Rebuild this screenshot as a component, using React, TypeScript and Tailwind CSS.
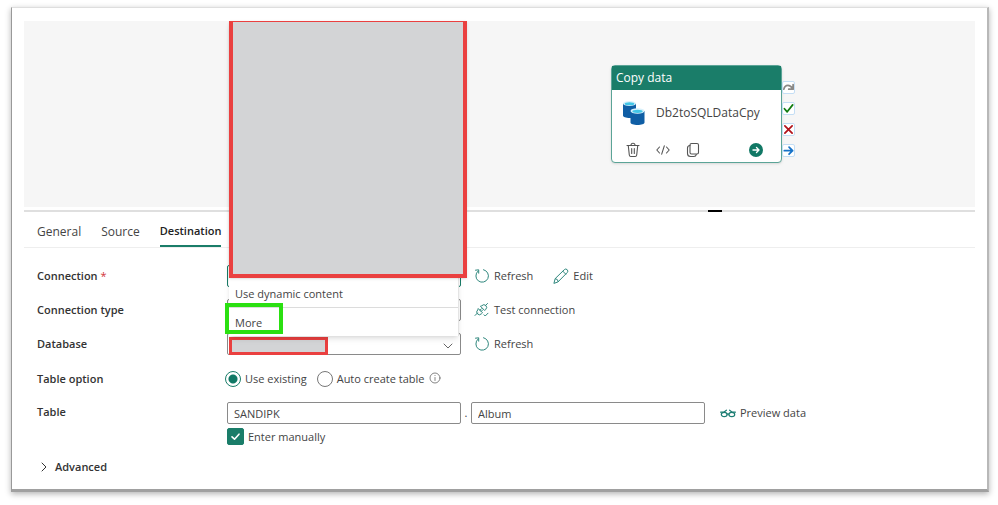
import React, { useState } from "react";

type IconProps = { className?: string };

const line = {
  fill: "none",
  stroke: "currentColor",
  strokeLinecap: "round" as const,
  strokeLinejoin: "round" as const,
  "aria-hidden": true,
};

function RefreshIcon() {
  return (
    <svg {...line} viewBox="0 0 16 16" strokeWidth="1" className="size-4 shrink-0 text-[#2f877d]">
      <path d="M9.500 1.700A6.300 6.300 0 1 1 4 3.100" />
      <path d="M1.500 2.200l3.200-.4v3.400" />
    </svg>
  );
}

function PencilIcon() {
  return (
    <svg {...line} viewBox="0 0 16 16" strokeWidth="1" className="size-4 shrink-0 text-[#2f877d]">
      <path d="M1 15l1.200-4.400L11.300 1.700a1.900 1.900 0 0 1 2.900 2.900L5.200 13.700z" />
      <path d="M9.800 3.200l2.900 2.900M2.400 10.600q2.600.3 2.900 3" />
    </svg>
  );
}

function PlugIcon() {
  return (
    <svg {...line} viewBox="0 0 16 16" strokeWidth="1" className="size-4 shrink-0 text-[#2f877d]">
      <path d="M1 13.500l2.500-2.500M13.500 1.500l-2 2" />
      <path d="M4.500 6.800l4 4-1.200 1.100a2.600 2.600 0 0 1-3.800-3.800z" />
      <path d="M6.700 4.500l4 4 1.100-1.200a2.600 2.600 0 0 0-3.800-3.800z" />
      <path d="M6 8.200l1.500-1.500M7.200 9.400l1.500-1.500M10 12.800l1.200 1.200 2.800-2.800" />
    </svg>
  );
}

function GlassesIcon() {
  return (
    <svg {...line} viewBox="0 0 16 12" strokeWidth="1.2" className="h-3 w-4 shrink-0 text-[#1c7d73]">
      <ellipse cx="4.200" cy="7.500" rx="2.900" ry="2.200" />
      <ellipse cx="11.800" cy="7.500" rx="2.900" ry="2.200" />
      <path d="M7.100 7.200q.9-.6 1.800 0M.6 5.200h3.200l2.600-2M15.400 5.200h-3.200l-2.600-2" />
    </svg>
  );
}

function InfoIcon() {
  return (
    <svg {...line} viewBox="0 0 12 12" strokeWidth="0.8" className="mb-0.5 size-3 shrink-0 text-[#666]">
      <circle cx="6" cy="6" r="5" />
      <path d="M6 5.500v3M6 3.500v.1" />
    </svg>
  );
}

function Chevron({ className }: IconProps) {
  return (
    <svg {...line} viewBox="0 0 10 10" strokeWidth="1" className={className}>
      <path d="M1 3l4 4 4-4" />
    </svg>
  );
}

function DatabaseIcon() {
  return (
    <svg viewBox="0 0 24 26" className="h-[26px] w-6 shrink-0" aria-hidden>
      <path d="M1 3.500v12c0 1.400 3 2.500 6.500 2.500S14 17 14 15.500v-12z" fill="#0f5ea5" />
      <ellipse cx="7.500" cy="3.500" rx="6.500" ry="2.500" fill="#d9f1fb" />
      <ellipse cx="7.500" cy="3.800" rx="4.800" ry="1.500" fill="#42c6e8" />
      <path d="M8.500 11v11.500c0 1.400 3.200 2.500 7 2.500s7-1.100 7-2.500V11z" fill="#0f5ea5" />
      <ellipse cx="15.500" cy="11" rx="7" ry="2.700" fill="#d9f1fb" />
      <ellipse cx="15.500" cy="11.300" rx="5.200" ry="1.600" fill="#42c6e8" />
    </svg>
  );
}

function TrashIcon() {
  return (
    <svg {...line} viewBox="0 0 14 16" strokeWidth="1.1" className="h-4 w-3.5 text-[#555]">
      <path d="M1 3.500h12M5 3.300a2 2 0 0 1 4 0M2.300 3.700l1 9.300q.2 1.500 1.500 1.500h4.400q1.300 0 1.500-1.500l1-9.300M5.700 6.500v5M8.300 6.500v5" />
    </svg>
  );
}

function CodeIcon() {
  return (
    <svg {...line} viewBox="0 0 14 12" strokeWidth="1.1" className="h-3 w-3.5 text-[#555]">
      <path d="M3.500 3L.8 6l2.700 3M10.500 3l2.700 3-2.700 3M8.300 1.800L5.700 10.200" />
    </svg>
  );
}

function CopyIcon() {
  return (
    <svg {...line} viewBox="0 0 14 16" strokeWidth="1.1" className="h-4 w-3.5 text-[#555]">
      <rect x="4" y="1.500" width="8.500" height="10.500" rx="1.500" />
      <path d="M4 3.500q-2.500.3-2.500 2.500v5.500q0 3 3 3H8q1.800 0 2.300-2" />
    </svg>
  );
}

function RunIcon() {
  return (
    <svg {...line} viewBox="0 0 14 14" strokeWidth="1.400" className="size-3.5">
      <circle cx="7" cy="7" r="7" fill="#117865" stroke="none" />
      <path d="M4 7h6M7.500 4.500L10 7 7.500 9.500" stroke="#fff" />
    </svg>
  );
}

const ports = [
  { name: "On skip", color: "text-[#8a8886]", d: "M.8 6.500q.7-3.500 3.700-3.500 2.500 0 4.200 3M9.200 2.300v4.200H5.200" },
  { name: "On success", color: "text-[#107c10]", d: "M1.300 5.200l2.500 2.800 5-6.300" },
  { name: "On fail", color: "text-[#b3131b]", d: "M1.700 1.700l6.600 6.600M8.300 1.700L1.700 8.300" },
  { name: "On completion", color: "text-[#1672c8]", d: "M1.200 5.200h7.500M5.500 2l3.200 3.200-3.200 3.200" },
];

function ActivityNode() {
  return (
    <div className="absolute left-[587px] top-11 flex items-start">
      <section className="w-[171px] rounded-sm border border-[#5ba497] bg-white shadow-sm">
        <h2 className="h-6 bg-[#1a7d69] px-1 text-xs leading-6 text-white">Copy data</h2>
        <div className="flex h-[46px] items-center gap-2.5 pl-2.5 text-xs text-[#444]">
          <DatabaseIcon />
          Db2toSQLDataCpy
        </div>
        <div className="flex h-[26px] items-center gap-4 pl-3.5 pr-[18px] pt-0.5">
          <button aria-label="Delete"><TrashIcon /></button>
          <button aria-label="View code"><CodeIcon /></button>
          <button aria-label="Copy"><CopyIcon /></button>
          <button aria-label="Run" className="ml-auto"><RunIcon /></button>
        </div>
      </section>
      <div className="flex flex-col gap-2 pt-4">
        {ports.map((p) => (
          <button
            key={p.name}
            aria-label={p.name}
            className={`flex h-[13px] w-[13px] items-center justify-center rounded-xs border border-[#c4def5] bg-white ${p.color}`}
          >
            <svg {...line} viewBox="0 0 10 10" strokeWidth="1.600" className="size-[11px] shrink-0">
              <path d={p.d} />
            </svg>
          </button>
        ))}
      </div>
    </div>
  );
}

function Action({ icon, children }: { icon: React.ReactNode; children: React.ReactNode }) {
  return (
    <button className="flex items-center gap-1 whitespace-nowrap">
      {icon}
      {children}
    </button>
  );
}

function ConnectionMenu() {
  return (
    <div className="absolute -bottom-[49px] left-0.5 z-10 w-[230px] border-r border-[#e4e4e4] bg-white shadow-md">
      <div className="h-[257px] w-[238px] border-4 border-t border-[#ea4040] bg-[#d3d4d6] shadow-sm" />
      <button className="block h-[30px] w-full border-b border-[#dcdcdc] px-1.5 pt-1 text-left">
        Use dynamic content
      </button>
      <button className="block h-7 w-full px-1.5 pt-0.5 text-left">More</button>
      <div className="pointer-events-none absolute -left-1 bottom-0.5 h-[31px] w-[58px] border-4 border-[#2be011]" />
    </div>
  );
}

const labelClass = "w-[190px] shrink-0 font-semibold text-[#333]";
const fieldClass = "h-[22px] w-[234px] appearance-none rounded-xs border border-[#8a8a8a] bg-white px-1.5";
const radioClass =
  "size-4 appearance-none rounded-full border border-[#777] checked:border-[#1a7d69] checked:bg-[radial-gradient(circle,#117865_4px,white_5px)]";

export default function App() {
  const [mode, setMode] = useState("existing");
  const [manual, setManual] = useState(true);

  return (
    <main className="bg-white pb-[13px] pl-[11px] pr-[9px] pt-[7px] font-['Open_Sans','Noto_Sans',sans-serif] text-[11px] leading-4 text-[#444]">
      <div className="border-b-[3px] border-l border-r-2 border-t border-b-[#a0a0a0] border-l-[#999] border-r-[#b8b8b8] border-t-[#dedede] px-3 pb-3.5 pt-[13px] shadow-[0_2px_6px_rgba(0,0,0,0.3)]">
        <div className="relative h-[186px] bg-[#f6f6f6]">
          <ActivityNode />
        </div>

        <div className="flex h-[7px] items-center">
          <div className="h-0.5 w-[684px] bg-[#dfdfdf]" />
          <div className="h-0.5 w-3.5 bg-black" />
          <div className="h-0.5 grow bg-[#dfdfdf]" />
        </div>

        <nav className="flex h-[34px] gap-5 border-b border-[#eee] pl-[13px] text-xs">
          <a href="#general" className="flex items-center pt-0.5">General</a>
          <a href="#source" className="flex items-center pt-0.5">Source</a>
          <a href="#destination" className="flex items-center border-b-2 border-[#1a7d69] pt-1 text-[11px] font-semibold text-[#222]">
            Destination
          </a>
        </nav>

        <form className="pl-[13px] pt-2.5" onSubmit={(e) => e.preventDefault()}>
          <div className="flex h-[35px] items-center">
            <label htmlFor="connection" className={labelClass}>
              Connection <span className="align-top font-normal text-[#d13438]">*</span>
            </label>
            <div className="relative mr-[13px]">
              <select id="connection" className="block h-[22px] w-[234px] appearance-none rounded-xs border border-[#1a7d69] bg-white px-1.5" />
              <ConnectionMenu />
            </div>
            <div className="flex gap-5">
              <Action icon={<RefreshIcon />}>Refresh</Action>
              <Action icon={<PencilIcon />}>Edit</Action>
            </div>
          </div>

          <div className="flex h-[34px] items-center">
            <label htmlFor="connection-type" className={labelClass}>Connection type</label>
            <select id="connection-type" className={`${fieldClass} mr-[13px]`} />
            <Action icon={<PlugIcon />}>Test connection</Action>
          </div>

          <div className="flex h-[34px] items-center">
            <label htmlFor="database" className={labelClass}>Database</label>
            <div className="relative mr-[13px]">
              <select id="database" className={`${fieldClass} block`} />
              <div className="absolute bottom-0 left-0.5 h-[18px] w-[99px] border-[3px] border-[#ea4040] bg-[#d3d4d6]" />
              <Chevron className="pointer-events-none absolute right-2 top-2 size-2.5 text-[#666]" />
            </div>
            <Action icon={<RefreshIcon />}>Refresh</Action>
          </div>

          <div role="radiogroup" aria-labelledby="table-option" className="flex h-[35px] items-center">
            <span id="table-option" className={labelClass}>Table option</span>
            <label className="mr-2.5 flex items-center gap-1">
              <input
                type="radio"
                name="table-option"
                checked={mode === "existing"}
                onChange={() => setMode("existing")}
                className={`${radioClass} -ml-0.5`}
              />
              Use existing
            </label>
            <label className="flex items-center gap-1">
              <input
                type="radio"
                name="table-option"
                checked={mode === "create"}
                onChange={() => setMode("create")}
                className={radioClass}
              />
              Auto create table
              <InfoIcon />
            </label>
          </div>

          <div className="flex items-start pt-1.5">
            <label htmlFor="schema" className={`${labelClass} pt-0.5`}>Table</label>
            <div>
              <div className="flex items-center">
                <input id="schema" defaultValue="SANDIPK" className={fieldClass} />
                <span className="w-2.5 text-center">.</span>
                <input aria-label="Table name" defaultValue="Album" className={`${fieldClass} mr-[15px]`} />
                <Action icon={<GlassesIcon />}>Preview data</Action>
              </div>
              <label className="mt-1 flex items-center gap-1">
                <span className="relative flex">
                  <input
                    type="checkbox"
                    checked={manual}
                    onChange={(e) => setManual(e.target.checked)}
                    className="size-[17px] appearance-none rounded-xs border border-[#1a7d69] checked:bg-[#1a7d69]"
                  />
                  {manual && (
                    <svg {...line} viewBox="0 0 17 17" strokeWidth="1.600" className="pointer-events-none absolute inset-0 size-[17px] text-white">
                      <path d="M5 8.800l2.500 2.400L12 6.200" />
                    </svg>
                  )}
                </span>
                Enter manually
              </label>
            </div>
          </div>

          <button className="mt-3.5 flex items-center gap-1.5 pl-0.5 font-semibold text-[#333]">
            <Chevron className="size-2.5 -rotate-90" />
            Advanced
          </button>
        </form>
      </div>
    </main>
  );
}
